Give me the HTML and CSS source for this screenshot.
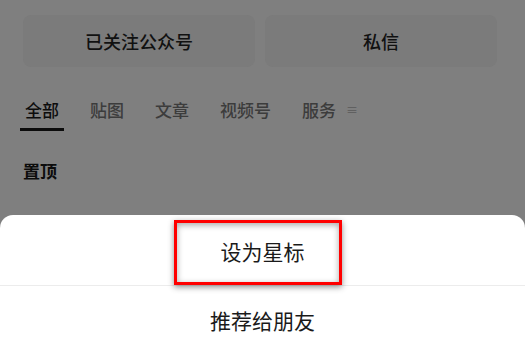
FILE: index.html
```html
<!DOCTYPE html>
<html lang="zh">
<head>
<meta charset="utf-8">
<link rel="stylesheet" href="styles.css">
</head>
<body>
<div class="screen">
  <div class="page">
    <div class="actions">
      <div class="btn">已关注公众号</div>
      <div class="btn">私信</div>
    </div>
    <div class="tabs">
      <div class="tab active">全部</div>
      <div class="tab">贴图</div>
      <div class="tab">文章</div>
      <div class="tab">视频号</div>
      <div class="tab">服务</div>
      <div class="menu">≡</div>
    </div>
    <div class="pinned">置顶</div>
  </div>
  <div class="sheet">
    <div class="item first">设为星标<span class="mark"></span></div>
    <div class="item second">推荐给朋友</div>
  </div>
</div>
</body>
</html>
```
FILE: styles.css
```css
* { box-sizing: border-box; }
html, body { margin: 0; padding: 0; }
body {
  width: 525px;
  height: 354px;
  overflow: hidden;
  font-family: "Noto Sans CJK SC", "Noto Sans", sans-serif;
  background: #7f7f7f;
}
.screen {
  display: flex;
  flex-direction: column;
  height: 354px;
}
.page {
  flex: none;
  height: 215px;
  padding: 15px 28px 0 23px;
  display: flex;
  flex-direction: column;
}
.actions {
  display: flex;
  gap: 10px;
}
.btn {
  flex: 1;
  height: 52px;
  border-radius: 8px;
  background: #7b7b7b;
  color: #111;
  font-size: 18px;
  font-weight: 500;
  display: flex;
  align-items: center;
  justify-content: center;
}
.tabs {
  display: flex;
  align-items: flex-start;
  gap: 21px;
  margin-top: 30px;
  margin-left: -3px;
}
.tab {
  font-size: 17px;
  line-height: 26px;
  color: #3c3c3c;
  font-weight: 500;
  padding: 0 5px 5px;
  border-bottom: 3px solid transparent;
}
.tab.active {
  color: #0c0c0c;
  border-bottom-color: #0c0c0c;
}
.menu {
  font-size: 12px;
  line-height: 26px;
  color: #5a5a5a;
  margin-left: -16px;
}
.pinned {
  margin-top: 30px;
  font-size: 17px;
  font-weight: 700;
  color: #0c0c0c;
  line-height: 20px;
}
.sheet {
  flex: 1;
  min-height: 0;
  overflow: hidden;
  background: #fff;
  border-radius: 13px 13px 0 0;
  display: flex;
  flex-direction: column;
}
.item {
  flex: none;
  height: 71px;
  display: flex;
  align-items: center;
  justify-content: center;
  font-size: 21px;
  color: #1a1a1a;
  position: relative;
}
.item.first {
  border-bottom: 1px solid #ececec;
  padding-top: 1px;
}
.item.second {
  padding-bottom: 4px;
}
.mark {
  position: absolute;
  left: 174px;
  top: 5px;
  width: 168px;
  height: 65px;
  border: 3px solid #f00;
  box-shadow: 0 2px 6px rgba(0,0,0,0.45), inset 0 2px 6px rgba(0,0,0,0.35);
}
```
